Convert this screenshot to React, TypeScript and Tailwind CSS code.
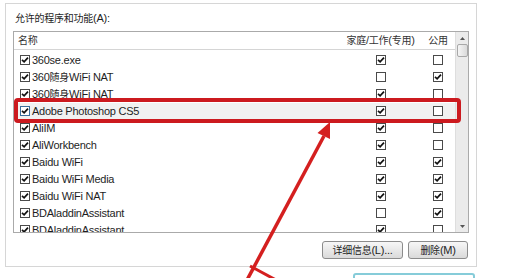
import React from "react";

const CJK = /([\u3000-\u9fff]+)/;

function T({ s }: { s: string }) {
  const parts = s.split(CJK);
  return (
    <>
      {parts.map((p, i) =>
        CJK.test(p) ? (
          <span key={i} className="text-[10px] font-['Noto_Sans_CJK_SC',sans-serif]">
            {p}
          </span>
        ) : (
          <span key={i}>{p}</span>
        )
      )}
    </>
  );
}

function Cb({ on, focus }: { on: boolean; focus?: boolean }) {
  return (
    <span
      className={`relative inline-block w-[10px] h-[10px] border shrink-0 bg-white ${
        focus ? "border-[#3a6f9c]" : "border-[#4a4a4a]"
      }`}
    >
      {on && (
        <svg viewBox="0 0 8 8" className="absolute inset-0 w-full h-full">
          <path d="M1 3.9 L3.1 5.9 L7 1.6" fill="none" stroke="#111" strokeWidth="1.7" />
        </svg>
      )}
    </span>
  );
}

const rows: { name: string; home: boolean; pub: boolean }[] = [
  { name: "360se.exe", home: true, pub: false },
  { name: "360随身WiFi NAT", home: false, pub: true },
  { name: "360随身WiFi NAT", home: true, pub: false },
  { name: "Adobe Photoshop CS5", home: true, pub: false },
  { name: "AliIM", home: true, pub: false },
  { name: "AliWorkbench", home: true, pub: false },
  { name: "Baidu WiFi", home: true, pub: true },
  { name: "Baidu WiFi Media", home: true, pub: true },
  { name: "Baidu WiFi NAT", home: true, pub: true },
  { name: "BDAladdinAssistant", home: false, pub: true },
  { name: "BDAladdinAssistant", home: true, pub: false },
];

export default function App() {
  return (
    <div className="relative w-[512px] h-[278px] overflow-hidden bg-white font-['Liberation_Sans','Noto_Sans_CJK_SC',sans-serif] text-[11px] tracking-[-0.25px] text-[#1e1e1e]">
      <div className="pt-[3px] pl-[5px]">
        <div className="w-[472px] h-[264px] border border-[#d6d6d6] flex flex-col">
          <div className="pt-[7px] pl-[9px] leading-[14px] h-[21px]">
            <T s="允许的程序和功能(A):" />
          </div>
          <div className="ml-[7px] mt-[6px] w-[456px] h-[202px] border border-[#aaaaaa] flex">
            <div className="flex-1 flex flex-col overflow-hidden">
              <div className="h-[18px] border-b border-[#d5d5d5] flex items-center text-[#333]">
                <div className="w-[326px] pl-[4px]">
                  <T s="名称" />
                </div>
                <div className="w-[81px] text-center">
                  <T s="家庭/工作(专用)" />
                </div>
                <div className="w-[34px] text-center">
                  <T s="公用" />
                </div>
              </div>
              <div className="pt-[2px] flex flex-col">
                {rows.map((r, i) => (
                  <div
                    key={i}
                    className={`h-[17px] shrink-0 flex items-center ${i === 3 ? "bg-[#f1f1f1]" : ""}`}
                  >
                    <div className="w-[326px] pl-[6px] flex items-center leading-[17px] whitespace-nowrap">
                      <Cb on={true} focus={i === 3} />
                      <span className="ml-[2px]">
                        <T s={r.name} />
                      </span>
                    </div>
                    <div className="w-[81px] flex justify-center pl-[1px]">
                      <Cb on={r.home} />
                    </div>
                    <div className="w-[34px] flex justify-center">
                      <Cb on={r.pub} />
                    </div>
                  </div>
                ))}
              </div>
            </div>
            <div className="w-[13px] bg-[#ebebeb] border-l border-[#dedede] flex flex-col items-center">
              <div className="h-[12px] flex items-center justify-center">
                <svg width="5" height="3" viewBox="0 0 5 3">
                  <path d="M0 3 L2.5 0 L5 3 Z" fill="#555" />
                </svg>
              </div>
              <div className="w-[11px] h-[13px] rounded-[2px] border border-[#a8a8a8] bg-linear-to-r from-[#f5f5f5] to-[#dadada]" />
              <div className="flex-1" />
              <div className="h-[12px] flex items-center justify-center">
                <svg width="5" height="3" viewBox="0 0 5 3">
                  <path d="M0 0 L2.5 3 L5 0 Z" fill="#555" />
                </svg>
              </div>
            </div>
          </div>
          <div className="mt-[8px] ml-[7px] w-[455px] flex justify-end gap-[5px]">
            <div className="h-[18px] w-[81px] rounded-[3px] border border-[#8c8c8c] bg-linear-to-b from-[#f7f7f7] to-[#dadada] flex items-center justify-center leading-none">
              <T s="详细信息(L)..." />
            </div>
            <div className="h-[18px] w-[60px] rounded-[3px] border border-[#8c8c8c] bg-linear-to-b from-[#f7f7f7] to-[#dadada] flex items-center justify-center leading-none">
              <T s="删除(M)" />
            </div>
          </div>
        </div>
      </div>
      <div className="mt-[6px] ml-[353px] w-[122px] h-[20px] rounded-[3px] border-2 border-[#86ccd9] bg-white" />

      <div className="absolute left-[14px] top-[98px] w-[447px] h-[25px] rounded-[4px] border-4 border-[#cc1a1f] pointer-events-none" />
      <svg className="absolute inset-0 pointer-events-none" width="512" height="278" viewBox="0 0 512 278">
        <line x1="324" y1="136" x2="247" y2="280" stroke="#d41f1f" strokeWidth="3.5" />
        <path d="M330 122 L330 139 L317.5 133 Z" fill="#d41f1f" />
        <line x1="250" y1="266" x2="276" y2="280" stroke="#d41f1f" strokeWidth="3" />
      </svg>
    </div>
  );
}
